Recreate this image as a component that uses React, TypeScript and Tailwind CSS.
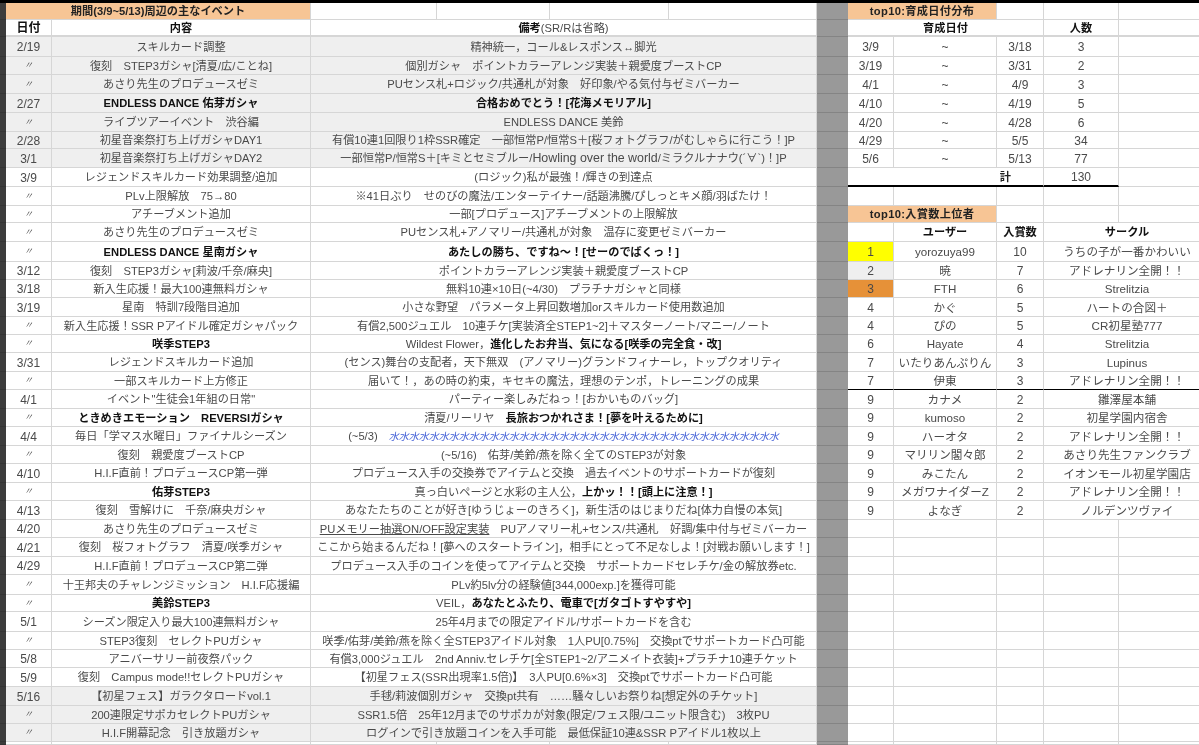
import type { ReactNode } from 'react'

const rowsClass =
  'grid-rows-[17px_17px_20px_18px_19px_19px_19px_17px_19px_19px_19px_17px_19px_20px_18px_18px_19px_18px_18px_19px_18px_19px_18px_19px_18px_19px_18px_19px_18px_19px_18px_20px_17px_20px_18px_18px_19px_19px_18px_18px_3px]'

const cell =
  'flex items-center justify-center whitespace-nowrap overflow-hidden pt-px border-r border-b border-[#d6d6d6]'
const tail = 'flex items-center justify-center whitespace-nowrap overflow-hidden pt-px border-b border-[#d6d6d6]'

interface Row {
  date: string
  title: string
  bold?: boolean
  note: ReactNode
  shade?: boolean
}

const rows: Row[] = [
  { date: '2/19', title: 'スキルカード調整', note: '精神統一，コール&レスポンス↔脚光', shade: true },
  { date: '〃', title: '復刻　STEP3ガシャ[清夏/広/ことね]', note: '個別ガシャ　ポイントカラーアレンジ実装＋親愛度ブーストCP', shade: true },
  { date: '〃', title: 'あさり先生のプロデュースゼミ', note: 'PUセンス札+ロジック/共通札が対象　好印象/やる気付与ゼミバーカー', shade: true },
  { date: '2/27', title: 'ENDLESS DANCE 佑芽ガシャ', bold: true, note: <b className="text-[#111]">合格おめでとう！[花海メモリアル]</b>, shade: true },
  { date: '〃', title: 'ライブツアーイベント　渋谷編', note: 'ENDLESS DANCE 美鈴', shade: true },
  { date: '2/28', title: '初星音楽祭打ち上げガシャDAY1', note: '有償10連1回限り1枠SSR確定　一部恒常P/恒常S＋[桜フォトグラフ/がむしゃらに行こう！]P', shade: true },
  { date: '3/1', title: '初星音楽祭打ち上げガシャDAY2', note: <>一部恒常P/恒常S＋[キミとセミブルー/<span className="text-[12.4px]">Howling over the world</span>/ミラクルナナウ(´∀`)！]P</>, shade: true },
  { date: '3/9', title: 'レジェンドスキルカード効果調整/追加', note: '(ロジック)私が最強！/輝きの到達点' },
  { date: '〃', title: 'PLv上限解放　75→80', note: '※41日ぶり　せのびの魔法/エンターテイナー/話題沸騰/ぴしっとキメ顔/羽ばたけ！' },
  { date: '〃', title: 'アチーブメント追加', note: '一部[プロデュース]アチーブメントの上限解放' },
  { date: '〃', title: 'あさり先生のプロデュースゼミ', note: 'PUセンス札+アノマリー/共通札が対象　温存に変更ゼミバーカー' },
  { date: '〃', title: 'ENDLESS DANCE 星南ガシャ', bold: true, note: <b className="text-[#111]">あたしの勝ち、ですね～！[せーのでばくっ！]</b> },
  { date: '3/12', title: '復刻　STEP3ガシャ[莉波/千奈/麻央]', note: 'ポイントカラーアレンジ実装＋親愛度ブーストCP' },
  { date: '3/18', title: '新入生応援！最大100連無料ガシャ', note: '無料10連×10日(~4/30)　プラチナガシャと同様' },
  { date: '3/19', title: '星南　特訓7段階目追加', note: '小さな野望　パラメータ上昇回数増加orスキルカード使用数追加' },
  { date: '〃', title: '新入生応援！SSR Pアイドル確定ガシャパック', note: '有償2,500ジュエル　10連チケ[実装済全STEP1~2]＋マスターノート/マニー/ノート' },
  { date: '〃', title: '咲季STEP3', bold: true, note: <>Wildest Flower，<b className="text-[#111]">進化したお弁当、気になる[咲季の完全食・改]</b></> },
  { date: '3/31', title: 'レジェンドスキルカード追加', note: '(センス)舞台の支配者，天下無双　(アノマリー)グランドフィナーレ，トップクオリティ' },
  { date: '〃', title: '一部スキルカード上方修正', note: '届いて！，あの時の約束，キセキの魔法，理想のテンポ，トレーニングの成果' },
  { date: '4/1', title: 'イベント"生徒会1年組の日常"', note: 'パーティー楽しみだねっ！[おかいものバッグ]' },
  { date: '〃', title: 'ときめきエモーション　REVERSIガシャ', bold: true, note: <>清夏/リーリヤ　<b className="text-[#111]">長旅おつかれさま！[夢を叶えるために]</b></> },
  { date: '4/4', title: '毎日「学マス水曜日」ファイナルシーズン', note: <>(~5/3)　<span className="text-[10px] italic text-[#3d5bd6]">{'水'.repeat(39)}</span></> },
  { date: '〃', title: '復刻　親愛度ブーストCP', note: '(~5/16)　佑芽/美鈴/燕を除く全てのSTEP3が対象' },
  { date: '4/10', title: 'H.I.F直前！プロデュースCP第一弾', note: 'プロデュース入手の交換券でアイテムと交換　過去イベントのサポートカードが復刻' },
  { date: '〃', title: '佑芽STEP3', bold: true, note: <>真っ白いページと水彩の主人公，<b className="text-[#111]">上かッ！！[頭上に注意！]</b></> },
  { date: '4/13', title: '復刻　雪解けに　千奈/麻央ガシャ', note: 'あなたたちのことが好き[ゆうじょーのきろく]，新生活のはじまりだね[体力自慢の本気]' },
  { date: '4/20', title: 'あさり先生のプロデュースゼミ', note: <><u>PUメモリー抽選ON/OFF設定実装</u>　PUアノマリー札+センス/共通札　好調/集中付与ゼミバーカー</> },
  { date: '4/21', title: '復刻　桜フォトグラフ　清夏/咲季ガシャ', note: 'ここから始まるんだね！[夢へのスタートライン]，相手にとって不足なしよ！[対戦お願いします！]' },
  { date: '4/29', title: 'H.I.F直前！プロデュースCP第二弾', note: 'プロデュース入手のコインを使ってアイテムと交換　サポートカードセレチケ/金の解放券etc.' },
  { date: '〃', title: '十王邦夫のチャレンジミッション　H.I.F応援編', note: 'PLv約5lv分の経験値[344,000exp.]を獲得可能' },
  { date: '〃', title: '美鈴STEP3', bold: true, note: <>VEIL，<b className="text-[#111]">あなたとふたり、電車で[ガタゴトすやすや]</b></> },
  { date: '5/1', title: 'シーズン限定入り最大100連無料ガシャ', note: '25年4月までの限定アイドル/サポートカードを含む' },
  { date: '〃', title: 'STEP3復刻　セレクトPUガシャ', note: '咲季/佑芽/美鈴/燕を除く全STEP3アイドル対象　1人PU[0.75%]　交換ptでサポートカード凸可能' },
  { date: '5/8', title: 'アニバーサリー前夜祭パック', note: '有償3,000ジュエル　2nd Anniv.セレチケ[全STEP1~2/アニメイト衣装]+プラチナ10連チケット' },
  { date: '5/9', title: '復刻　Campus mode!!セレクトPUガシャ', note: '【初星フェス(SSR出現率1.5倍)】　3人PU[0.6%×3]　交換ptでサポートカード凸可能' },
  { date: '5/16', title: '【初星フェス】ガラクタロードvol.1', note: '手毬/莉波個別ガシャ　交換pt共有　……騒々しいお祭りね[想定外のチケット]', shade: true },
  { date: '〃', title: '200連限定サポカセレクトPUガシャ', note: 'SSR1.5倍　25年12月までのサポカが対象(限定/フェス限/ユニット限含む)　3枚PU', shade: true },
  { date: '〃', title: 'H.I.F開幕記念　引き放題ガシャ', note: 'ログインで引き放題コインを入手可能　最低保証10連&SSR Pアイドル1枚以上', shade: true },
]

const spans = [
  ['3/9', '3/18', '3'],
  ['3/19', '3/31', '2'],
  ['4/1', '4/9', '3'],
  ['4/10', '4/19', '5'],
  ['4/20', '4/28', '6'],
  ['4/29', '5/5', '34'],
  ['5/6', '5/13', '77'],
]

const ranking = [
  ['1', 'yorozuya99', '10', 'うちの子が一番かわいい'],
  ['2', '暁', '7', 'アドレナリン全開！！'],
  ['3', 'FTH', '6', 'Strelitzia'],
  ['4', 'かぐ', '5', 'ハートの合図＋'],
  ['4', 'ぴの', '5', 'CR初星塾777'],
  ['6', 'Hayate', '4', 'Strelitzia'],
  ['7', 'いたりあんぷりん', '3', 'Lupinus'],
  ['7', '伊東', '3', 'アドレナリン全開！！'],
  ['9', 'カナメ', '2', '雛澤屋本舗'],
  ['9', 'kumoso', '2', '初星学園内宿舎'],
  ['9', 'ハーオタ', '2', 'アドレナリン全開！！'],
  ['9', 'マリリン閣々郎', '2', 'あさり先生ファンクラブ'],
  ['9', 'みこたん', '2', 'イオンモール初星学園店'],
  ['9', 'メガワナイダーZ', '2', 'アドレナリン全開！！'],
  ['9', 'よなぎ', '2', 'ノルデンツヴァイ'],
]

function EventGrid() {
  return (
    <div className={`grid w-[811px] grid-cols-[46px_259px_126px_113px_119px_148px] ${rowsClass}`}>
      <div className={`${cell} col-span-2 bg-[#f7c595] font-bold text-[#222]`}>期間(3/9~5/13)周辺の主なイベント</div>
      <div className={cell} />
      <div className={cell} />
      <div className={cell} />
      <div className={cell} />

      <div className={`${cell} border-b-2 text-[12px] font-bold text-[#111]`}>日付</div>
      <div className={`${cell} border-b-2 font-bold text-[#111]`}>内容</div>
      <div className={`${cell} col-span-4 border-b-2`}>
        <b className="text-[#111]">備考</b>(SR/Rは省略)
      </div>

      {rows.map((row, i) => {
        const bg = row.shade ? 'bg-[#efefef]' : 'bg-white'
        return (
          <div key={i} className="contents">
            <div className={`${cell} ${bg} ${row.date === '〃' ? 'text-[9px] italic' : 'text-[12px]'}`}>{row.date}</div>
            <div className={`${cell} ${bg} ${row.bold ? 'font-bold text-[#111]' : ''}`}>{row.title}</div>
            <div className={`${cell} ${bg} col-span-4`}>
              <span>{row.note}</span>
            </div>
          </div>
        )
      })}

      <div className={cell} />
      <div className={cell} />
      <div className={cell} />
      <div className={cell} />
      <div className={cell} />
      <div className={cell} />
    </div>
  )
}

function BlankRow() {
  return (
    <div className="contents">
      <div className={cell} />
      <div className={cell} />
      <div className={cell} />
      <div className={cell} />
      <div className={tail} />
    </div>
  )
}

function SideGrid() {
  return (
    <div className={`grid w-[351px] grid-cols-[46px_103px_47px_75px_80px] ${rowsClass}`}>
      <div className={`${cell} col-span-2 bg-[#f7c595] font-bold tracking-[0.3px] text-[#222]`}>top10:育成日付分布</div>
      <div className={cell} />
      <div className={cell} />
      <div className={tail} />

      <div className={`${cell} col-span-3 border-b-2 font-bold text-[#111]`}>育成日付</div>
      <div className={`${cell} border-b-2 font-bold text-[#111]`}>人数</div>
      <div className={`${tail} border-b-2`} />

      {spans.map(([from, to, count]) => (
        <div key={from} className="contents text-[12px]">
          <div className={cell}>{from}</div>
          <div className={cell}>~</div>
          <div className={cell}>{to}</div>
          <div className={cell}>{count}</div>
          <div className={tail} />
        </div>
      ))}

      <div className={`${cell} col-span-3 justify-end border-b-[2px] border-b-black pr-[32px] font-bold text-[#222]`}>計</div>
      <div className={`${cell} border-b-[2px] border-b-black text-[12px]`}>130</div>
      <div className={tail} />

      <BlankRow />

      <div className={`${cell} col-span-2 bg-[#f7c595] font-bold tracking-[0.3px] text-[#222]`}>top10:入賞数上位者</div>
      <div className={cell} />
      <div className={cell} />
      <div className={tail} />

      <div className={cell} />
      <div className={`${cell} font-bold text-[#111]`}>ユーザー</div>
      <div className={`${cell} font-bold text-[#111]`}>入賞数</div>
      <div className={`${tail} col-span-2 pl-[11px] font-bold text-[#111]`}>サークル</div>

      {ranking.map(([rank, user, prizes, circle], i) => {
        const medal =
          i === 0 ? 'bg-[#ffff00]' : i === 1 ? 'bg-[#efefef]' : i === 2 ? 'bg-[#e69138]' : ''
        const rule = i === 7 ? 'border-b-black' : ''
        return (
          <div key={i} className="contents">
            <div className={`${cell} ${medal} ${rule} text-[12px]`}>{rank}</div>
            <div className={`${cell} ${rule} text-[11.6px]`}>{user}</div>
            <div className={`${cell} ${rule} text-[12px]`}>{prizes}</div>
            <div className={`${tail} ${rule} col-span-2 pl-[11px] text-[11.6px]`}>{circle}</div>
          </div>
        )
      })}

      {Array.from({ length: 13 }, (_, i) => (
        <BlankRow key={i} />
      ))}
    </div>
  )
}

function Gutter({ className }: { className: string }) {
  return (
    <div className={`grid ${rowsClass} ${className}`}>
      {Array.from({ length: 41 }, (_, i) => (
        <div key={i} className="border-b border-[#00000022]" />
      ))}
    </div>
  )
}

export default function App() {
  return (
    <div className="h-[745px] w-[1199px] overflow-hidden bg-white font-['Liberation_Sans','Noto_Sans_CJK_JP',sans-serif] text-[11.2px] text-[#4a4a4a] blur-[0.35px]">
      <div className="h-[3px] bg-black" />
      <div className="flex">
        <Gutter className="w-[6px] bg-[#3c3c3c]" />
        <EventGrid />
        <Gutter className="w-[31px] bg-[#999999]" />
        <SideGrid />
      </div>
    </div>
  )
}
